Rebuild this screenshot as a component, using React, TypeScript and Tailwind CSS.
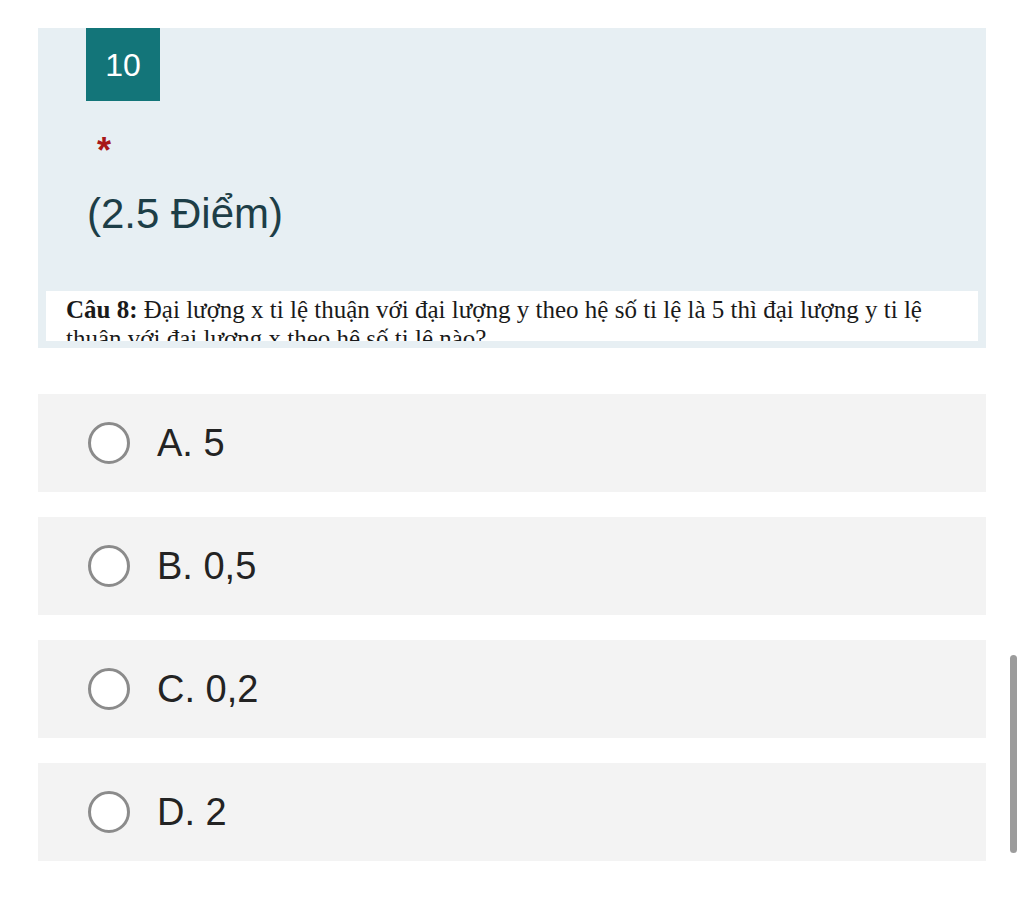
import React from "react";

const options = ["A. 5", "B. 0,5", "C. 0,2", "D. 2"];

export default function App() {
  return (
    <div className="relative w-[1024px] h-[916px] bg-white overflow-hidden" style={{ fontFamily: '"Liberation Sans", Arial, sans-serif' }}>
      <div className="pt-[28px] px-[38px]">
        <div className="bg-[#e7eff3] h-[320px] flex flex-col">
          <div className="ml-[48px] w-[74px] h-[73px] bg-[#137579] flex items-center justify-center text-white text-[32px] leading-none">
            10
          </div>
          <div className="ml-[59px] mt-[32px] text-[#a81818] text-[36px] font-bold leading-none h-[30px]">*</div>
          <div className="ml-[49px] mt-[30px] text-[#1d3e47] text-[42px] leading-none">(2.5 Điểm)</div>
          <div className="mt-auto mb-[7px] mx-[8px] h-[50px] bg-white overflow-hidden pl-[20px] pt-[4px]">
            <div className="text-[25px] leading-[29px] text-[#1a1a1a] whitespace-nowrap" style={{ fontFamily: '"Liberation Serif", "Times New Roman", serif' }}>
              <b>Câu 8:</b> Đại lượng x ti lệ thuận với đại lượng y theo hệ số ti lệ là 5 thì đại lượng y ti lệ
              <br />
              thuận với đại lượng x theo hệ số ti lệ nào?
            </div>
          </div>
        </div>
        <div className="mt-[46px] flex flex-col gap-[25px]">
          {options.map((o) => (
            <div key={o} className="bg-[#f3f3f3] h-[98px] flex items-center pl-[50px]">
              <div className="w-[42px] h-[42px] rounded-full border-[3px] border-[#8b8b8b] bg-white" />
              <div className="ml-[27px] text-[38px] leading-none text-[#232323]">{o}</div>
            </div>
          ))}
        </div>
      </div>
      <div className="absolute left-[1010px] top-[655px] w-[7px] h-[198px] rounded-full bg-[#9c9c9c]" />
    </div>
  );
}
